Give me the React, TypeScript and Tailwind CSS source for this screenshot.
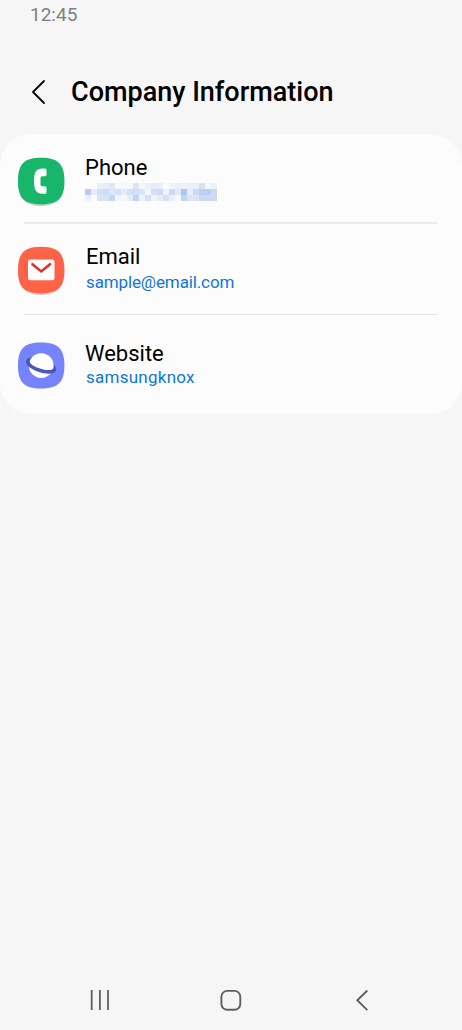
import React from "react";

const mosaic: string[][] = [
  ["#fcfcfd", "#fcfcfd", "#ebf1fb", "#e6eefb", "#dce7f8", "#f8fafd", "#f5f8fd", "#f7f9fd", "#d9e4f8", "#f4f7fd", "#e9f0fb", "#e5edfb", "#e9effb", "#fcfcfd", "#f0f4fc", "#e8effb", "#ebf0fa", "#eaf0fa", "#eaf0fa", "#d8e2f7", "#f5f8fd", "#eef3fb"],
  ["#b9cdf3", "#e6edfa", "#d4e0f7", "#cfdcf5", "#dce6f8", "#d4e1f8", "#e5edfb", "#d4dff6", "#d2dff6", "#dbe5f8", "#f3f6fc", "#d2dff6", "#cddbf5", "#eef3fc", "#ccdaf5", "#e0e9f9", "#adc6f0", "#e8eefb", "#cad9f4", "#bfd1f1", "#bdcff1", "#cbd9f3"],
  ["#e8eefb", "#fcfcfd", "#dae4f8", "#d7e2f7", "#c5d5f2", "#f0f4fc", "#f6f8fd", "#e4ecfa", "#c3d4f2", "#edf2fb", "#d4e0f7", "#eef3fc", "#e4ebf9", "#d5e1f6", "#e8effb", "#f5f8fd", "#c3d3f2", "#dbe5f8", "#dae4f8", "#cad8f3", "#cbd9f4", "#ccd9f4"],
];

function PhoneIcon() {
  return (
    <svg className="block" width="54" height="54" viewBox="0 0 54 54">
      <path d="M27 6C42.5 6 50.4 13 50.4 29C50.4 44.5 42.5 52 27 52C11.5 52 4 44.5 4 29C4 13 11.5 6 27 6Z" fill="#aeb8b3" opacity=".65" />
      <path d="M27 3.8C44 3.8 50.4 10 50.4 27.1C50.4 44.2 44 50.4 27 50.4C10 50.4 4 44.2 4 27.1C4 10 10 3.8 27 3.8Z" fill="#17b66b" />
      <path d="M31 14.6H28.5C22.2 14.6 20 18 20 27.1C20 36.2 22.2 39.8 28.5 39.8H31Q32.5 39.8 32.5 38.3V33.7Q32.5 32.2 31 32.2H28.2Q26.5 32.2 26.5 30.5V24Q26.5 22.3 28.2 22.3H31Q32.5 22.3 32.5 20.8V16.1Q32.5 14.6 31 14.6Z" fill="#fdfffd" />
    </svg>
  );
}

function MailIcon() {
  return (
    <svg className="block" width="54" height="54" viewBox="0 0 54 54">
      <path d="M27 6C42.5 6 50.4 13 50.4 29C50.4 44.5 42.5 52 27 52C11.5 52 4 44.5 4 29C4 13 11.5 6 27 6Z" fill="#bdb3b0" opacity=".65" />
      <path d="M27 3.8C44 3.8 50.4 10 50.4 27.1C50.4 44.2 44 50.4 27 50.4C10 50.4 4 44.2 4 27.1C4 10 10 3.8 27 3.8Z" fill="#ff6347" />
      <rect x="14" y="16.6" width="26.5" height="20.6" rx="2.5" fill="#fffdfd" />
      <path d="M18.4 21.2L27.2 28.4L36 21.2" fill="none" stroke="#e02e2b" strokeWidth="2.6" strokeLinecap="round" strokeLinejoin="miter" />
    </svg>
  );
}

function PlanetIcon() {
  return (
    <svg className="block" width="54" height="54" viewBox="0 0 54 54">
      <path d="M27 3.6C44 3.6 50.4 9.8 50.4 26.6C50.4 43.4 44 49.6 27 49.6C10 49.6 4 43.4 4 26.6C4 9.8 10 3.6 27 3.6Z" fill="#7583fc" />
      <ellipse cx="27.1" cy="26.4" rx="15.8" ry="7" fill="#4a58ba" transform="rotate(18 27.1 26.4)" />
      <circle cx="27.2" cy="26.6" r="12.4" fill="#ffffff" />
      <g transform="rotate(18 27.1 26.4)">
        <path d="M11.3 26.4C11.3 30.3 18.4 33.4 27.1 33.4C35.8 33.4 42.9 30.3 42.9 26.4L39.4 25.7C38.8 28.2 33.7 29.7 27.1 29.7C20.5 29.7 15.4 28.2 14.8 25.7Z" fill="#4a58ba" />
      </g>
    </svg>
  );
}

function Row({ icon, children }: { icon: React.ReactNode; children: React.ReactNode }) {
  return (
    <div className="flex">
      <div className="w-[71px] shrink-0">{icon}</div>
      <div className="flex flex-col whitespace-nowrap">{children}</div>
    </div>
  );
}

export default function App() {
  return (
    <div className="flex h-[1030px] w-[462px] flex-col overflow-hidden bg-[#f6f6f6] font-['Roboto',sans-serif] text-black">
      <div className="h-[62px] pl-[30px] pt-[3px] text-[19px] leading-[24px] text-[#808080]">12:45</div>
      <header className="flex h-[72px] items-start">
        <svg className="mt-[16px] ml-[30px] shrink-0" width="18" height="28" viewBox="0 0 18 28">
          <path d="M14 3L3 14L14 25" fill="none" stroke="#080808" strokeWidth="1.8" strokeLinecap="round" strokeLinejoin="round" />
        </svg>
        <h1 className="ml-[23px] mt-[13px] whitespace-nowrap text-[27px] font-medium leading-[34px]">Company Information</h1>
      </header>

      <main className="flex h-[280px] shrink-0 flex-col rounded-[31px] bg-[#fcfcfd] pl-[14px]">
        <div className="h-[88px] pt-[20px]">
          <Row icon={<PhoneIcon />}>
            <div className="pt-px text-[22px] leading-[26px]">Phone</div>
            <div className="mt-[2px] grid grid-cols-[repeat(22,6px)]">
              {mosaic.flat().map((color, index) => (
                <span key={index} className="h-[6px] w-[6px]" style={{ backgroundColor: color }} />
              ))}
            </div>
          </Row>
        </div>
        <div className="ml-[10px] h-[2px] w-[413px] bg-[#ececed]" />
        <div className="h-[90px] pt-[19px]">
          <Row icon={<MailIcon />}>
            <div className="pl-px pt-px text-[22px] leading-[26px]">Email</div>
            <div className="mt-[2px] pl-px text-[17px] leading-[20px] tracking-[-0.13px] text-[#0f76db]">sample@email.com</div>
          </Row>
        </div>
        <div className="ml-[10px] h-px w-[413px] bg-[#e2e2e3]" />
        <div className="pt-[24px]">
          <Row icon={<PlanetIcon />}>
            <div className="pt-[2px] text-[22px] leading-[26px]">Website</div>
            <div className="pl-px text-[17px] leading-[20px] tracking-[0.25px] text-[#0f76db]">samsungknox</div>
          </Row>
        </div>
      </main>

      <nav className="mt-auto flex h-[60px] items-center pl-[88px]">
        <svg width="24" height="24" viewBox="0 0 24 24">
          <path d="M3.7 2V22M11.9 2V22M20 2V22" stroke="#606060" strokeWidth="1.8" />
        </svg>
        <svg className="ml-[107px]" width="24" height="24" viewBox="0 0 24 24">
          <rect x="2.4" y="2.9" width="18.9" height="18.9" rx="5.8" fill="none" stroke="#606060" strokeWidth="1.9" />
        </svg>
        <svg className="ml-[107px]" width="24" height="24" viewBox="0 0 24 24">
          <path d="M17.3 2.5L7.3 12.3L17.3 22.1" fill="none" stroke="#606060" strokeWidth="1.9" />
        </svg>
      </nav>
    </div>
  );
}
